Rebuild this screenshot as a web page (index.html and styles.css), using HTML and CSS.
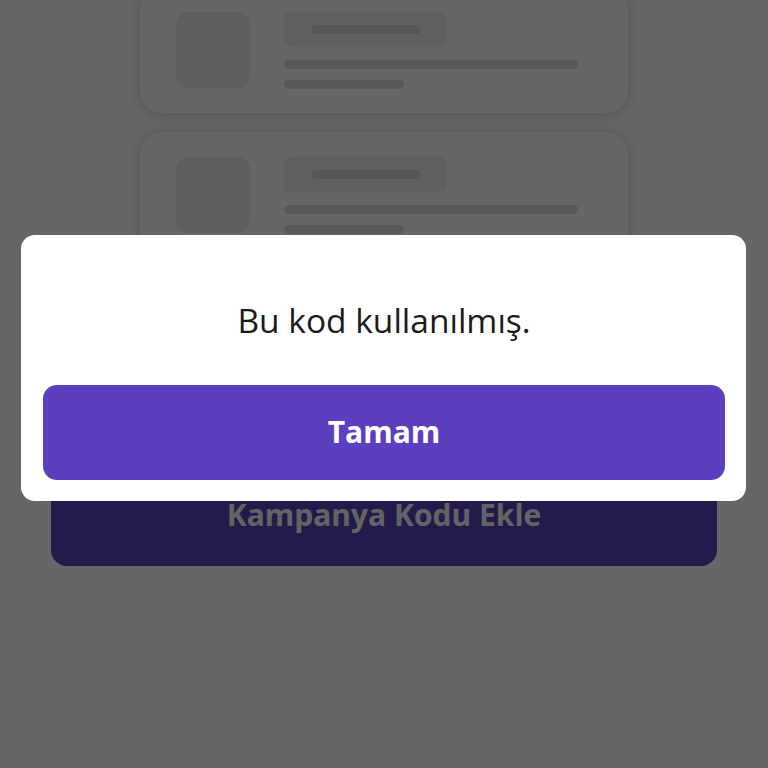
FILE: index.html
```html
<!DOCTYPE html>
<html lang="tr">
<head>
<meta charset="utf-8">
<title>Kampanya Kodu</title>
<link rel="stylesheet" href="styles.css">
</head>
<body>
<div class="page">
  <div class="list">
    <div class="card">
      <div class="thumb"></div>
      <div class="lines">
        <div class="title-block"><div class="title-bar"></div></div>
        <div class="line line-long"></div>
        <div class="line line-short"></div>
      </div>
    </div>
    <div class="card">
      <div class="thumb"></div>
      <div class="lines">
        <div class="title-block"><div class="title-bar"></div></div>
        <div class="line line-long"></div>
        <div class="line line-short"></div>
      </div>
    </div>
  </div>
  <div class="cta-wrap">
    <button class="cta">Kampanya Kodu Ekle</button>
  </div>
</div>
<div class="overlay">
  <div class="dialog">
    <div class="message">Bu kod kullanılmış.</div>
    <button class="ok">Tamam</button>
  </div>
</div>
</body>
</html>
```
FILE: styles.css
```css
* { box-sizing: border-box; }
html, body {
  margin: 0;
  padding: 0;
  width: 768px;
  height: 768px;
  overflow: hidden;
  background: #ffffff;
  font-family: "Open Sans", "Noto Sans", sans-serif;
}
.page {
  width: 768px;
  height: 768px;
  display: flex;
  flex-direction: column;
}
.list {
  display: flex;
  flex-direction: column;
  gap: 19px;
  margin-top: -13px;
  padding: 0 140px;
}
.card {
  height: 126px;
  background: #ffffff;
  border-radius: 22px;
  box-shadow: 0 2px 14px rgba(0, 0, 0, 0.16);
  display: flex;
  padding: 25px 36px 0;
  gap: 34px;
}
.thumb {
  width: 74px;
  height: 76px;
  border-radius: 12px;
  background: #ededed;
  flex-shrink: 0;
}
.lines {
  flex: 1;
  display: flex;
  flex-direction: column;
}
.title-block {
  width: 162px;
  height: 35px;
  border-radius: 6px;
  background: #f0f0f0;
  display: flex;
  align-items: center;
  padding-left: 28px;
}
.title-bar {
  width: 108px;
  height: 9px;
  border-radius: 4px;
  background: #d8d8d8;
}
.line {
  height: 9px;
  border-radius: 5px;
  background: #dcdcdc;
}
.line-long {
  width: 294px;
  margin-top: 13px;
}
.line-short {
  width: 120px;
  margin-top: 11px;
}
.cta-wrap {
  margin-top: auto;
  margin-bottom: 202px;
  padding: 0 51px;
}
.cta {
  width: 100%;
  height: 100px;
  border: none;
  border-radius: 16px;
  background: #5a41bb;
  color: #f8f8f8;
  font-family: "Open Sans", "Noto Sans", sans-serif;
  font-weight: 700;
  font-size: 30px;
  padding: 0 0 4px;
}
.overlay {
  position: fixed;
  inset: 0;
  background: rgba(0, 0, 0, 0.6);
  padding: 235px 22px 0 21px;
}
.dialog {
  background: #ffffff;
  border-radius: 14px;
  padding: 21px 21px 21px 22px;
  display: flex;
  flex-direction: column;
}
.message {
  height: 129px;
  display: flex;
  align-items: center;
  justify-content: center;
  font-size: 33.5px;
  color: #1b1b1b;
  padding-bottom: 2px;
}
.ok {
  height: 95px;
  border: none;
  border-radius: 14px;
  background: #5b3fbe;
  color: #ffffff;
  font-family: "Open Sans", "Noto Sans", sans-serif;
  font-weight: 700;
  font-size: 30px;
  padding: 0 0 2px;
}
```
